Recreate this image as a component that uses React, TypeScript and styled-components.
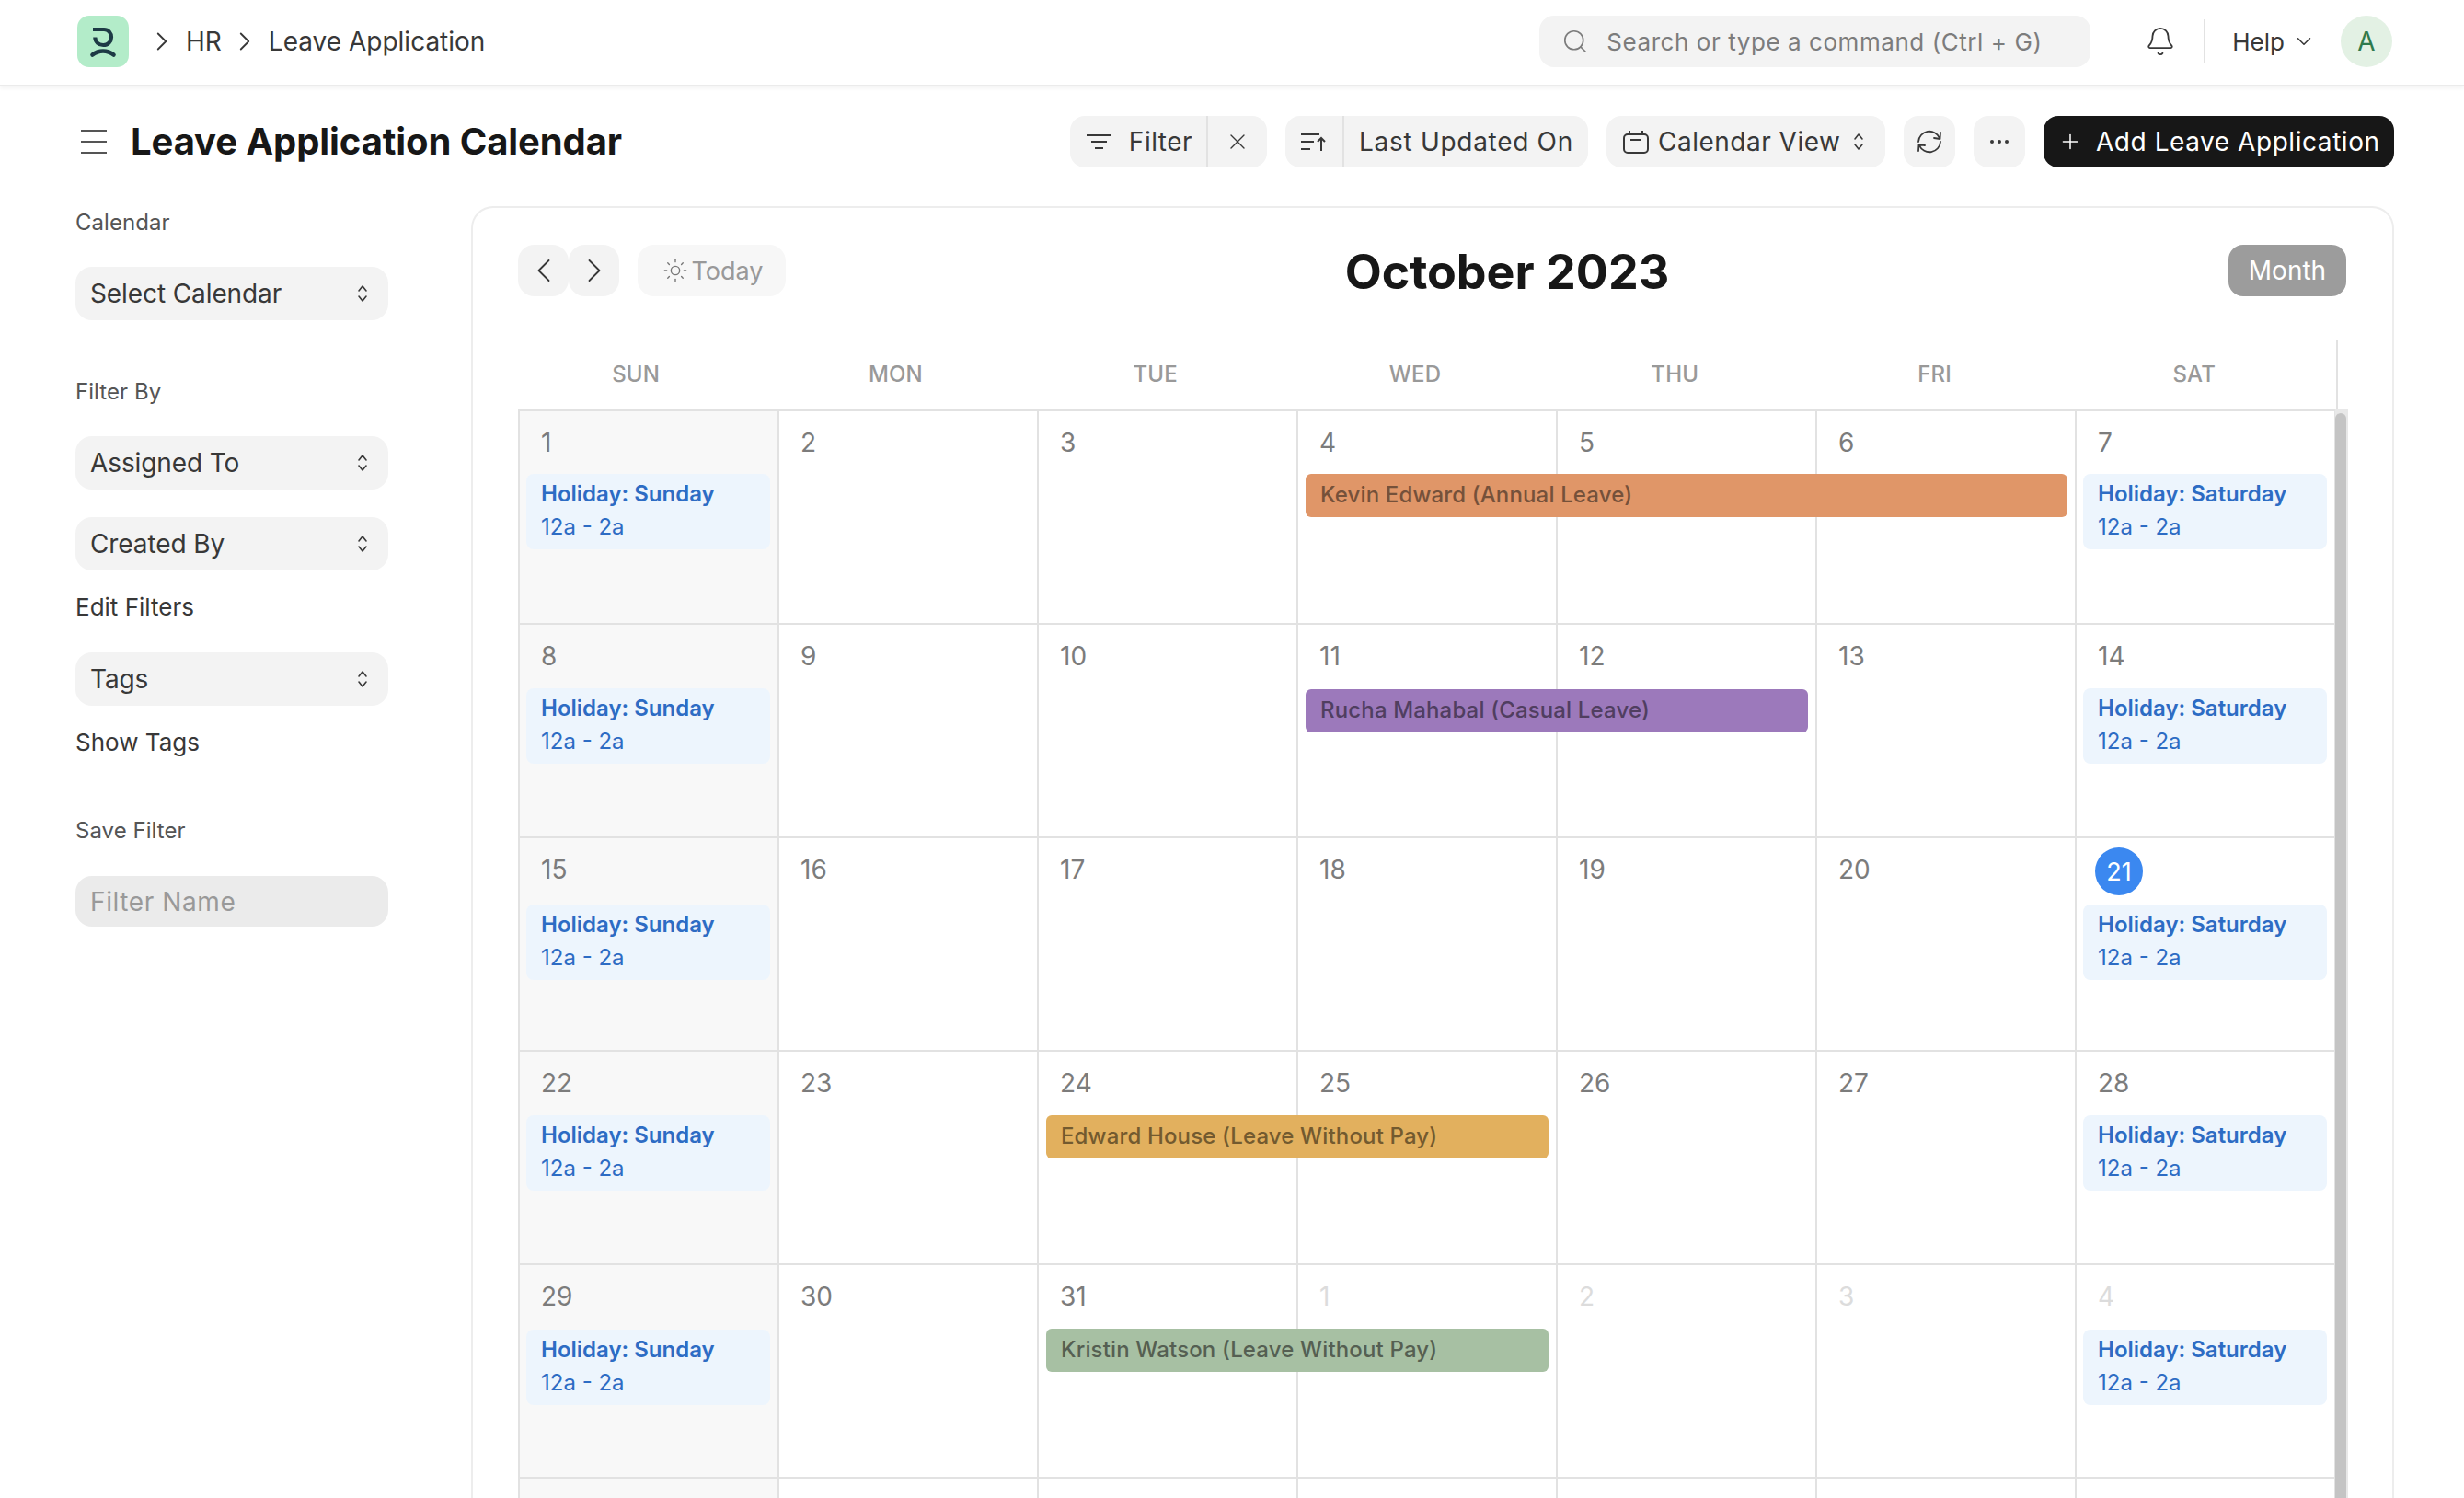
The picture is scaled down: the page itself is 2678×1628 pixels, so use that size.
import React from "react";
import styled, { createGlobalStyle } from "styled-components";
import { Bell, ChevronDown, ChevronLeft, ChevronRight, Plus, Search, Sun, X } from "lucide-react";

const Global = createGlobalStyle`
  * { box-sizing: border-box; }
  html, body { margin: 0; height: 1628px; overflow: hidden; background: #fff; }
  body { font-family: Inter, "Noto Sans", sans-serif; color: #383838; }
`;

const Navbar = styled.header`
  display: flex; align-items: center; height: 94px; padding: 0 78px 2px 84px;
  border-bottom: 2px solid #ebebeb; box-shadow: 0 2px 4px rgba(0,0,0,.05); background: #fff;
`;
const LogoMark = styled.svg`width: 56px; height: 56px; flex: none;`;
const Crumb = styled.span`font-size: 28px; line-height: 34px; color: #383838;`;
const CrumbChevron = styled(ChevronRight)<{ $ml: number }>`
  margin-left: ${p => p.$ml}px; margin-right: 9px; flex: none;
`;
const SearchBox = styled.div`
  display: flex; align-items: center; gap: 19px; width: 599px; height: 56px; margin-left: auto;
  padding: 0 24px; border-radius: 16px; background: #f3f3f3; color: #7c7c7c;
  font-size: 26px; letter-spacing: .56px;
`;
const BellButton = styled(Bell)`margin-left: 59px; flex: none;`;
const NavRule = styled.div`width: 2px; height: 48px; margin-left: 30px; background: #e2e2e2;`;
const HelpMenu = styled.div`display: flex; align-items: center; gap: 8px; margin-left: 29px; font-size: 26px; color: #383838;`;
const Avatar = styled.div`
  display: flex; align-items: center; justify-content: center; width: 56px; height: 56px;
  margin-left: 27px; border-radius: 50%; background: #e3f1e4; color: #2f7a4d; font-size: 28px;
`;

const PageHead = styled.div`display: flex; align-items: center; height: 56px; margin: 32px 76px 0 82px;`;
const MenuIcon = styled.svg`width: 28px; height: 28px; margin-left: 6px; flex: none;`;
const PageTitle = styled.h1`
  margin: 0 0 0 26px; font-size: 40px; line-height: 56px; font-weight: 700; color: #171717;
  letter-spacing: -.1px;
`;
const Actions = styled.div`display: flex; align-items: center; gap: 20px; margin-left: auto;`;
const ToolGroup = styled.div`
  display: flex; align-items: center; height: 56px; border-radius: 16px; background: #f3f3f3;
  font-size: 28px; color: #383838; letter-spacing: .5px;
`;
const ToolPart = styled.div<{ $w: number; $rule?: boolean; $pl?: number; $ls?: number }>`
  display: flex; align-items: center; justify-content: center; gap: 19px; height: 100%; width: ${p => p.$w}px;
  padding-left: ${p => p.$pl ?? 0}px; letter-spacing: ${p => p.$ls ?? 0.5}px;
  ${p => p.$rule ? "border-right: 2px solid #e2e2e2;" : ""}
`;
const IconButton = styled(ToolGroup)`justify-content: center; width: 56px;`;
const ViewButton = styled(ToolGroup)`
  gap: 10px; width: 303px; padding: 0 0 0 18px;
  & > svg:last-child { margin-left: 4px; }
`;
const PrimaryButton = styled.button`
  display: flex; align-items: center; gap: 15px; width: 381px; height: 56px; padding: 0 0 0 16px;
  border: 0; border-radius: 16px; background: #171717; color: #fff;
  font: 400 28px Inter, sans-serif; letter-spacing: .55px;
`;

const Main = styled.div`display: flex; gap: 90px; margin: 42px 76px 0 82px; align-items: flex-start;`;
const Sidebar = styled.aside`display: flex; flex-direction: column; width: 340px; flex: none;`;
const SideLabel = styled.div<{ $mt?: number }>`
  height: 36px; line-height: 36px; font-size: 24px; color: #555; letter-spacing: .05px; margin-top: ${p => p.$mt ?? 0}px;
`;
const SideLink = styled.div<{ $mt: number }>`
  height: 36px; line-height: 36px; font-size: 26px; color: #383838; margin-top: ${p => p.$mt}px;
`;
const SelectBox = styled.div<{ $mt: number }>`
  display: flex; align-items: center; justify-content: space-between; height: 58px; margin-top: ${p => p.$mt}px;
  padding: 0 22px 0 16px; border-radius: 18px; background: #f3f3f3; font-size: 28px; color: #383838; letter-spacing: -.1px;
`;
const NameInput = styled.div`
  display: flex; align-items: center; height: 55px; margin-top: 31px; padding: 0 16px; border-radius: 18px;
  background: #ebebeb; font-size: 28px; color: #999; letter-spacing: .6px;
`;
const UpDownSvg = styled.svg`width: 12px; height: 20px; flex: none;`;

const Card = styled.section`
  position: relative; flex: 1; min-width: 0; height: 1404px; padding: 40px 50px 0 49px; overflow: hidden;
  border: 2px solid #ededed; border-bottom: 0; border-radius: 24px 24px 0 0; background: #fff;
`;
const CalToolbar = styled.div`display: flex; align-items: center; justify-content: space-between; height: 56px;`;
const ToolLeft = styled.div`display: flex; align-items: center; width: 291px;`;
const NavStep = styled.div`
  display: flex; align-items: center; justify-content: center; width: 55px; height: 56px; border-radius: 18px;
  background: #f3f3f3; color: #383838;
`;
const TodayButton = styled.div`
  display: flex; align-items: center; justify-content: center; gap: 4px; width: 161px; height: 56px; margin-left: 20px;
  padding-left: 2px; border-radius: 18px; background: #f7f7f7; color: #999; font-size: 27px;
`;
const MonthTitle = styled.h2`margin: 4px 0 0; font-size: 52px; font-weight: 700; line-height: 56px; color: #171717;`;
const MonthButton = styled.div`
  display: flex; align-items: center; justify-content: center; width: 128px; height: 56px; border-radius: 16px;
  background: #9c9c9c; color: #fff; font-size: 28px;
`;

const CalBody = styled.div`position: relative; width: 1978px; margin-top: 47px;`;
const HeadRow = styled.div`
  display: grid; grid-template-columns: repeat(7, 1fr); height: 76px; border-right: 2px solid #e2e2e2;
`;
const HeadCell = styled.div`
  padding: 20px 26px 0 0; text-align: center; font-size: 24px; line-height: 36px; font-weight: 500; color: #999; letter-spacing: .2px;
`;
const Weeks = styled.div`margin-right: 2px; border-top: 2px solid #e2e2e2; border-left: 2px solid #e2e2e2;`;
const Week = styled.div`
  display: grid; grid-template-columns: repeat(7, 1fr); height: 232px; border-bottom: 2px solid #e2e2e2;
`;
const DayCell = styled.div<{ $col: number; $off: boolean }>`
  grid-row: 1; grid-column: ${p => p.$col}; min-width: 0; padding: 0 8px 0 7px; border-right: 2px solid #e2e2e2;
  background: ${p => p.$off ? "#f8f8f8" : "#fff"};
`;
const DayTop = styled.div<{ $h: number }>`height: ${p => p.$h}px; padding-top: 15px;`;
const DayNum = styled.span<{ $muted: boolean }>`
  display: block; margin-left: 16px; font-size: 28px; line-height: 38px; color: ${p => p.$muted ? "#dcdcdc" : "#7c7c7c"};
`;
const TodayNum = styled.span`
  display: flex; align-items: center; justify-content: center; width: 52px; height: 52px; margin: -5px 0 0 13px;
  border-radius: 50%; background: #3b88f0; color: #fff; font-size: 27px;
`;
const Holiday = styled.div`
  height: 82px; padding: 4px 0 6px 16px; border-radius: 8px; background: #edf5fd; color: #2d6cc4; font-size: 24px; line-height: 36px;
`;
const HolidayTitle = styled.div`font-weight: 600;`;
const HolidayTime = styled.div`font-weight: 400;`;
const LeaveBar = styled.div<{ $start: number; $span: number; $bg: string; $fg: string; $top: number }>`
  grid-row: 1; grid-column: ${p => p.$start} / span ${p => p.$span}; align-self: start; z-index: 1;
  height: 47px; margin: ${p => p.$top}px 10px 0 8px; padding-left: 16px; border-radius: 6px;
  background: ${p => p.$bg}; color: ${p => p.$fg}; font-size: 24px; line-height: 46px; font-weight: 500; letter-spacing: .15px;
`;
const ScrollTrack = styled.div`
  position: absolute; left: 1975px; top: 76px; width: 14px; height: 1200px; padding: 4px 2px 0 0; background: #e8e8e8;
`;
const ScrollThumb = styled.div`height: 100%; border-radius: 6px 6px 0 0; background: #c4c4c4;`;

const UpDown = () => (
  <UpDownSvg viewBox="0 0 12 20" fill="none" stroke="#383838" strokeWidth="1.6" strokeLinecap="round" strokeLinejoin="round">
    <path d="M2 7l4-5 4 5M2 13l4 5 4-5" />
  </UpDownSvg>
);

const Logo = () => (
  <LogoMark viewBox="0 0 56 56">
    <rect width="56" height="56" rx="13" fill="#b3ecc9" />
    <path d="M17 15h12c5 0 8 4 8 8.500s-3.500 8.500-8.800 8.500c-5 0-8.700-3.300-8.900-8.500" fill="none" stroke="#1d3a45" strokeWidth="4.200" />
    <path d="M16.500 42.500c3.500-2.700 7.500-4 11.500-4s8 1.300 11.500 4" fill="none" stroke="#1d3a45" strokeWidth="4.600" strokeLinecap="round" />
  </LogoMark>
);

const weeks: { n: number; muted?: boolean }[][] = [
  [1, 2, 3, 4, 5, 6, 7].map(n => ({ n })),
  [8, 9, 10, 11, 12, 13, 14].map(n => ({ n })),
  [15, 16, 17, 18, 19, 20, 21].map(n => ({ n })),
  [22, 23, 24, 25, 26, 27, 28].map(n => ({ n })),
  [{ n: 29 }, { n: 30 }, { n: 31 }, { n: 1, muted: true }, { n: 2, muted: true }, { n: 3, muted: true }, { n: 4, muted: true }],
];
const eventTops = [68, 69, 72, 69, 70];

type Leave = { week: number; start: number; span: number; bg: string; fg: string; top: number; text: string };
const leaves: Leave[] = [
  { week: 0, start: 4, span: 3, bg: "#e09668", fg: "#75513a", top: 68, text: "Kevin Edward (Annual Leave)" },
  { week: 1, start: 4, span: 2, bg: "#9c79bb", fg: "#503e60", top: 70, text: "Rucha Mahabal (Casual Leave)" },
  { week: 3, start: 3, span: 2, bg: "#e2b05e", fg: "#735a2f", top: 69, text: "Edward House (Leave Without Pay)" },
  { week: 4, start: 3, span: 2, bg: "#a7c0a3", fg: "#555f52", top: 69, text: "Kristin Watson (Leave Without Pay)" },
];

export default function App() {
  return (
    <>
      <Global />
      <Navbar>
        <Logo />
        <CrumbChevron $ml={19} size={34} strokeWidth={1.3} color="#383838" />
        <Crumb>HR</Crumb>
        <CrumbChevron $ml={8} size={34} strokeWidth={1.3} color="#383838" />
        <Crumb>Leave Application</Crumb>
        <SearchBox>
          <Search size={30} strokeWidth={1.3} color="#7c7c7c" />
          Search or type a command (Ctrl + G)
        </SearchBox>
        <BellButton size={34} strokeWidth={1.3} color="#383838" />
        <NavRule />
        <HelpMenu>Help <ChevronDown size={26} strokeWidth={1.4} /></HelpMenu>
        <Avatar>A</Avatar>
      </Navbar>

      <PageHead>
        <MenuIcon viewBox="0 0 28 28" stroke="#555" strokeWidth="2"><path d="M0 2h28M0 14h28M0 26h28" /></MenuIcon>
        <PageTitle>Leave Application Calendar</PageTitle>
        <Actions>
          <ToolGroup>
            <ToolPart $w={150} $rule $pl={3}>
              <svg width="27" height="18" viewBox="0 0 27 18" stroke="#383838" strokeWidth="2"><path d="M0 2h27M5 9h17M9 16h9" /></svg>
              Filter
            </ToolPart>
            <ToolPart $w={64}><X size={28} strokeWidth={1.2} /></ToolPart>
          </ToolGroup>
          <ToolGroup>
            <ToolPart $w={64} $rule>
              <svg width="28" height="20" viewBox="0 0 28 20" fill="none" stroke="#383838" strokeWidth="2"><path d="M0 2h20M0 10h14M0 18h10M22 20V7M18 10l4-4 4 4" /></svg>
            </ToolPart>
            <ToolPart $w={265} $ls={0.7}>Last Updated On</ToolPart>
          </ToolGroup>
          <ViewButton>
            <svg width="28" height="25" viewBox="0 0 28 25" fill="none" stroke="#383838" strokeWidth="2"><rect x="1" y="4" width="26" height="20" rx="4" /><path d="M7 0v4M21 0v4M8 10h12" /></svg>
            Calendar View
            <UpDown />
          </ViewButton>
          <IconButton>
            <svg width="30" height="26" viewBox="0 0 30 26" fill="none" stroke="#383838" strokeWidth="1.8" strokeLinejoin="round" strokeLinecap="round">
              <path d="M3 13A12 12 0 0 1 26 9M27 3l-.5 7-6.500-1M27 13A12 12 0 0 1 4 17M3 23l.5-7 6.500 1" />
            </svg>
          </IconButton>
          <IconButton>
            <svg width="22" height="6" viewBox="0 0 22 6" fill="#383838"><circle cx="3" cy="3" r="2" /><circle cx="11" cy="3" r="2" /><circle cx="19" cy="3" r="2" /></svg>
          </IconButton>
          <PrimaryButton><Plus size={26} strokeWidth={1.4} />Add Leave Application</PrimaryButton>
        </Actions>
      </PageHead>

      <Main>
        <Sidebar>
          <SideLabel>Calendar</SideLabel>
          <SelectBox $mt={30}>Select Calendar<UpDown /></SelectBox>
          <SideLabel $mt={60}>Filter By</SideLabel>
          <SelectBox $mt={30}>Assigned To<UpDown /></SelectBox>
          <SelectBox $mt={30}>Created By<UpDown /></SelectBox>
          <SideLink $mt={22}>Edit Filters</SideLink>
          <SelectBox $mt={31}>Tags<UpDown /></SelectBox>
          <SideLink $mt={22}>Show Tags</SideLink>
          <SideLabel $mt={60}>Save Filter</SideLabel>
          <NameInput>Filter Name</NameInput>
        </Sidebar>
        <Card>
          <CalToolbar>
            <ToolLeft>
              <NavStep><ChevronLeft size={44} strokeWidth={1} /></NavStep>
              <NavStep><ChevronRight size={44} strokeWidth={1} /></NavStep>
              <TodayButton><Sun size={28} strokeWidth={1.2} color="#777" />Today</TodayButton>
            </ToolLeft>
            <MonthTitle>October 2023</MonthTitle>
            <MonthButton>Month</MonthButton>
          </CalToolbar>
          <CalBody>
            <HeadRow>
              {["SUN", "MON", "TUE", "WED", "THU", "FRI", "SAT"].map(d => <HeadCell key={d}>{d}</HeadCell>)}
            </HeadRow>
            <Weeks>
              {weeks.map((week, wi) => (
                <Week key={wi}>
                  {week.map((day, i) => {
                    const today = wi === 2 && i === 6;
                    const title = i === 0 ? "Holiday: Sunday" : "Holiday: Saturday";
                    return (
                      <DayCell key={i} $col={i + 1} $off={i === 0}>
                        <DayTop $h={eventTops[wi]}>
                          {today ? <TodayNum>{day.n}</TodayNum> : <DayNum $muted={!!day.muted}>{day.n}</DayNum>}
                        </DayTop>
                        {(i === 0 || i === 6) && (
                          <Holiday>
                            <HolidayTitle>{title}</HolidayTitle>
                            <HolidayTime>12a - 2a</HolidayTime>
                          </Holiday>
                        )}
                      </DayCell>
                    );
                  })}
                  {leaves.filter(l => l.week === wi).map(l => (
                    <LeaveBar key={l.text} $start={l.start} $span={l.span} $bg={l.bg} $fg={l.fg} $top={l.top}>{l.text}</LeaveBar>
                  ))}
                </Week>
              ))}
              <Week>
                {[1, 2, 3, 4, 5, 6, 7].map(c => <DayCell key={c} $col={c} $off={c === 1} />)}
              </Week>
            </Weeks>
            <ScrollTrack><ScrollThumb /></ScrollTrack>
          </CalBody>
        </Card>
      </Main>
    </>
  );
}
